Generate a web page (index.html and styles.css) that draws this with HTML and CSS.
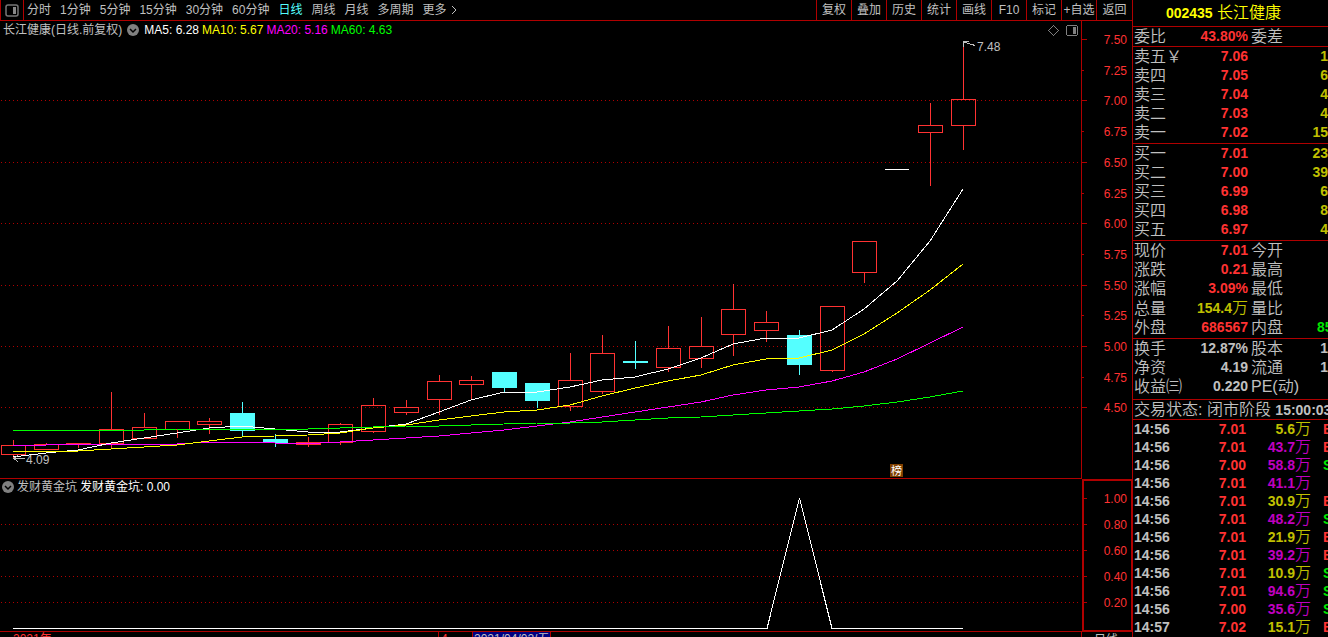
FILE: index.html
```html
<!DOCTYPE html>
<html lang="zh-CN">
<head>
<meta charset="UTF-8" />
<meta name="viewport" content="width=device-width, initial-scale=1" />
<title>002435 长江健康</title>
<link rel="stylesheet" href="styles.css">
</head>
<body>

<div class="terminal">
  <main class="main">
    <nav class="toolbar">
      <button class="layout-btn" aria-label="布局">
        <svg width="14" height="13" viewBox="0 0 14 13"><rect x="1" y="1" width="12" height="11" rx="2" fill="none" stroke="#777" stroke-width="1.5"/><rect x="8" y="3" width="3" height="7" fill="#888"/></svg>
      </button>
      <div class="periods">
        <button>分时</button>
        <button>1分钟</button>
        <button>5分钟</button>
        <button>15分钟</button>
        <button>30分钟</button>
        <button>60分钟</button>
        <button class="active">日线</button>
        <button>周线</button>
        <button>月线</button>
        <button>多周期</button>
        <button class="more">更多<svg width="6" height="10" viewBox="0 0 6 10"><path d="M1 1l4 4-4 4" fill="none" stroke="#c0c0c0"/></svg></button>
      </div>
      <div class="tools">
        <button>复权</button>
        <button>叠加</button>
        <button>历史</button>
        <button>统计</button>
        <button>画线</button>
        <button>F10</button>
        <button>标记</button>
        <button>+自选</button>
        <button>返回</button>
      </div>
    </nav>

    <section class="pane">
      <div class="legend">
        <span>长江健康(日线.前复权)</span>
        <svg class="chevron" width="12" height="12" viewBox="0 0 12 12"><circle cx="6" cy="6" r="6" fill="#808080"/><path d="M3 5l3 3 3-3" fill="none" stroke="#000" stroke-width="1.5"/></svg>
        <span class="white">MA5: 6.28</span>
        <span class="yellow">MA10: 5.67</span>
        <span class="magenta">MA20: 5.16</span>
        <span class="green">MA60: 4.63</span>
      </div>
      <svg id="price" class="chart" viewBox="0 21 1132 457"></svg>
    </section>

    <section class="pane sub">
      <div class="legend">
        <svg width="12" height="12" viewBox="0 0 12 12"><circle cx="6" cy="6" r="6" fill="#808080"/><path d="M3 5l3 3 3-3" fill="none" stroke="#000" stroke-width="1.5"/></svg>
        <span>发财黄金坑</span>
        <span class="white">发财黄金坑: 0.00</span>
      </div>
      <svg id="indicator" class="chart" viewBox="0 478 1132 154"></svg>
    </section>

    <svg class="chart" viewBox="0 632 1132 18">
      <path class="axis" d="M438.5 632v18M1081.5 632v18"/>
      <text class="tick" x="13" y="643">2021年</text>
      <text class="tick" x="441" y="643">4</text>
      <rect x="472.5" y="631.5" width="78" height="20" fill="#000080" stroke="#b00000"/>
      <text class="note" x="474" y="643">2021/04/02/五</text>
      <text class="note" x="1094" y="644">日线</text>
    </svg>
  </main>

  <aside class="side">
    <h1><b>002435</b> 长江健康</h1>
    <table class="quote single">
      <tr><th>委比</th><td class="up">43.80%</td><th>委差</th><td></td></tr>
    </table>
    <table class="quote">
      <tr><th>卖五￥</th><td class="up">7.06</td><th></th><td class="vol">1</td></tr>
      <tr><th>卖四</th><td class="up">7.05</td><th></th><td class="vol">6</td></tr>
      <tr><th>卖三</th><td class="up">7.04</td><th></th><td class="vol">4</td></tr>
      <tr><th>卖二</th><td class="up">7.03</td><th></th><td class="vol">4</td></tr>
      <tr><th>卖一</th><td class="up">7.02</td><th></th><td class="vol">15</td></tr>
    </table>
    <table class="quote">
      <tr><th>买一</th><td class="up">7.01</td><th></th><td class="vol">23</td></tr>
      <tr><th>买二</th><td class="up">7.00</td><th></th><td class="vol">39</td></tr>
      <tr><th>买三</th><td class="up">6.99</td><th></th><td class="vol">6</td></tr>
      <tr><th>买四</th><td class="up">6.98</td><th></th><td class="vol">8</td></tr>
      <tr><th>买五</th><td class="up">6.97</td><th></th><td class="vol">4</td></tr>
    </table>
    <table class="quote">
      <tr><th>现价</th><td class="up">7.01</td><th>今开</th><td></td></tr>
      <tr><th>涨跌</th><td class="up">0.21</td><th>最高</th><td></td></tr>
      <tr><th>涨幅</th><td class="up">3.09%</td><th>最低</th><td></td></tr>
      <tr><th>总量</th><td class="vol">154.4<i>万</i></td><th>量比</th><td></td></tr>
      <tr><th>外盘</th><td class="up">686567</td><th>内盘</th><td class="down cut">85</td></tr>
    </table>
    <table class="quote basics">
      <tr><th>换手</th><td>12.87%</td><th>股本</th><td>1</td></tr>
      <tr><th>净资</th><td>4.19</td><th>流通</th><td>1</td></tr>
      <tr><th>收益㈢</th><td>0.220</td><th>PE(动)</th><td></td></tr>
    </table>
    <p class="status">交易状态: 闭市阶段 <b>15:00:03</b></p>
    <table class="ticks">
      <tbody id="ticks"></tbody>
    </table>
  </aside>
</div>

<script>
  // center x, open/close top, open/close bottom, high, low, falling
  const candles = [
    [13, 445, 454, 440, 457], [46, 444, 449, 443, 449], [78, 443, 444, 443, 447],
    [111, 429, 443, 392, 447], [144, 427, 438, 413, 438], [177, 421, 429, 421, 437],
    [209, 421, 424, 418, 433], [242, 413, 430, 402, 435, 1], [275, 439, 442, 434, 446, 1],
    [308, 442, 444, 437, 446], [340, 424, 442, 423, 444], [373, 405, 431, 398, 432],
    [406, 407, 412, 400, 414], [439, 381, 399, 375, 414], [471, 380, 384, 376, 399],
    [504, 372, 387, 372, 391, 1], [537, 383, 400, 383, 407, 1], [570, 380, 406, 353, 410],
    [602, 353, 391, 335, 393], [635, 361, 362, 341, 368, 1], [668, 348, 367, 326, 371],
    [701, 346, 358, 317, 367], [733, 309, 334, 284, 355], [766, 322, 330, 311, 341],
    [799, 335, 364, 330, 374, 1], [832, 306, 370, 306, 371], [864, 241, 272, 241, 282],
    [930, 125, 132, 103, 185], [963, 99, 125, 41, 149]
  ];

  const averages = {
    '#ff00ff': '13,445 46,445 78,444 177,444 209,442 242,442 275,443 320,443 340,442 373,440 406,438 439,436 471,433 504,430 537,426 570,422 602,417 635,412 668,407 701,402 733,395 766,390 799,387 832,381 864,372 897,359 930,343 963,327',
    '#ffffff': '13,457 46,453 67,451 78,450 111,443 144,438 177,433 209,428 242,426 275,429 308,432 340,432 373,428 406,424 439,412 471,400 504,392 537,392 570,387 602,380 635,377 668,369 701,358 733,344 766,338 799,338 832,330 864,309 897,281 930,241 963,189',
    '#ffff00': '13,451 78,451 111,449 144,447 177,445 209,441 242,437 275,436 308,435 340,433 373,428 406,425 439,420 471,416 504,412 537,410 570,405 602,396 635,388 668,381 701,375 733,365 766,359 799,358 832,350 864,334 897,313 930,290 963,264',
    '#00ff00': '13,430 144,430 177,429 308,429 340,428 373,427 406,426 439,426 504,424 537,423 570,423 602,422 635,420 668,418 701,417 733,415 766,413 799,411 832,409 864,406 897,402 930,397 963,391'
  };

  function line(d, cls) {
    return `<path class="${cls}" d="${d}"/>`;
  }

  function label(y, value) {
    return `<text class="tick" x="1127" y="${y + 5}" text-anchor="end">${value}</text>`;
  }

  function drawPrice() {
    let out = line('M1081.5 21V478', 'axis');
    for (let i = 0; i <= 12; i++) {
      const y = Math.round(39 + i * 30.7);
      const major = i % 2 === 0;
      out += line(`M1082 ${y + 0.5}h${major ? 5 : 2}`, 'axis');
      out += label(y, (7.5 - i * 0.25).toFixed(2));
      if (major && i > 0) out += line(`M1 ${y + 0.5}H1081`, 'grid');
    }
    candles.forEach(([x, top, bottom, high, low, falling]) => {
      const cls = falling ? 'fall' : 'rise';
      const c = x + 0.5;
      out += line(`M${c} ${high}V${top}M${c} ${bottom}V${low + 1}`, cls);
      out += `<rect class="${cls}" x="${x - 11.5}" y="${top + 0.5}" width="24" height="${bottom - top}"/>`;
    });
    out += line('M885 169.5H909', 'flat');
    for (const color in averages) {
      out += `<polyline class="curve" stroke="${color}" points="${averages[color]}"/>`;
    }
    out += line('M975 45.5L964 42M969 41.5H963V47M25 458.5H14M18 455.5L14 458.5L18 462', 'arrow');
    out += '<text class="note" x="977" y="51">7.48</text><text class="note" x="26" y="464">4.09</text>';
    // pane controls in the top right corner
    out += '<path class="control" d="M1053.5 25.5l5 5-5 5-5-5z"/><rect class="control" x="1066.5" y="25.5" width="11" height="10" rx="2"/><rect x="1073" y="27" width="3" height="7" fill="#808080"/>';
    out += '<rect x="890" y="464" width="13" height="13" fill="#804000"/><text class="badge" x="891" y="475">榜</text>';
    document.getElementById('price').innerHTML = out;
  }

  function drawIndicator() {
    let out = line('M0 478.5H1082M0 631.5H1082', 'axis');
    out += '<rect class="box" x="1083" y="480" width="49" height="151"/>';
    for (let i = 0; i < 5; i++) {
      const y = 498 + i * 26;
      out += line(`M1083 ${y + 0.5}h4`, 'axis');
      if (i < 4) out += line(`M1083 ${y + 13.5}h1`, 'axis');
      out += label(y, (1 - i * 0.2).toFixed(2));
      if (i > 0) out += line(`M1 ${y + 0.5}H1081`, 'grid');
    }
    out += '<polyline class="curve" stroke="#fff" points="13,628.5 767,628.5 799.5,498 832,628.5 963,628.5"/>';
    document.getElementById('indicator').innerHTML = out;
  }

  const ticks = [
    ['14:56', '7.01', '5.6', 'B'],
    ['14:56', '7.01', '43.7', 'B', 1],
    ['14:56', '7.00', '58.8', 'S', 1],
    ['14:56', '7.01', '41.1', '', 1],
    ['14:56', '7.01', '30.9', 'B'],
    ['14:56', '7.01', '48.2', 'S', 1],
    ['14:56', '7.01', '21.9', 'B'],
    ['14:56', '7.01', '39.2', 'B', 1],
    ['14:56', '7.01', '10.9', 'S'],
    ['14:56', '7.01', '94.6', 'S', 1],
    ['14:56', '7.00', '35.6', 'S', 1],
    ['14:57', '7.02', '15.1', 'B']
  ];

  document.getElementById('ticks').innerHTML = ticks.map(([time, price, qty, side, big]) =>
    `<tr><td>${time}</td><td class="up">${price}</td><td class="${big ? 'big' : 'vol'}">${qty}<i>万</i></td><td class="${side === 'B' ? 'up' : 'down'}">${side}</td></tr>`
  ).join('');

  drawPrice();
  drawIndicator();
</script>

</body>
</html>
```
FILE: styles.css
```css
body {
  margin: 0;
  background: #000;
  color: #c0c0c0;
  font-family: "Liberation Sans", "Noto Sans CJK SC", sans-serif;
  font-size: 12px;
  height: 100vh;
  overflow: hidden;
}
.terminal {
  display: grid;
  grid-template-columns: minmax(0, 1fr) 196px;
  height: 100%;
}
button {
  background: none;
  border: none;
  padding: 0;
  color: inherit;
  font: inherit;
  line-height: 20px;
  white-space: nowrap;
  cursor: pointer;
}
.toolbar {
  display: flex;
  height: 20px;
  border-bottom: 1px solid #b00000;
}
.layout-btn {
  display: flex;
  align-items: center;
  justify-content: center;
  width: 24px;
  border-left: 1px solid #b00000;
  border-right: 1px solid #b00000;
}
.periods {
  display: flex;
  flex: 1;
  gap: 9px;
  padding-left: 3px;
}
.periods .active {
  color: #54ffff;
}
.more {
  display: flex;
  align-items: center;
  gap: 4px;
}
.tools {
  display: flex;
}
.tools button {
  width: 35px;
  border-left: 1px solid #b00000;
}
.tools button:last-child {
  width: 36px;
}
.pane {
  position: relative;
}
.legend {
  position: absolute;
  top: 0;
  left: 3px;
  display: flex;
  align-items: center;
  gap: 3px;
  line-height: 18px;
}
.sub .legend {
  left: 2px;
}
.chevron {
  margin: 0 2px;
}
.white { color: #fff; }
.yellow { color: #ffff00; }
.magenta { color: #ff00ff; }
.green { color: #00ff00; }

.chart {
  display: block;
  width: 100%;
}
.chart path,
.chart rect,
.chart polyline {
  shape-rendering: crispEdges;
}
.axis { stroke: #b00000; }
.grid {
  stroke: #b00000;
  stroke-dasharray: 1 3;
}
.box {
  fill: none;
  stroke: #b00000;
  stroke-width: 2px;
}
.rise {
  fill: none;
  stroke: #ff3232;
}
.fall {
  fill: #54ffff;
  stroke: #54ffff;
}
.flat { stroke: #fff; }
.curve { fill: none; }
.arrow {
  fill: none;
  stroke: #c0c0c0;
}
.control {
  fill: none;
  stroke: #808080;
}
.tick { fill: #ff3232; }
.note { fill: #c0c0c0; }
.badge {
  fill: #fff;
  font-size: 11px;
}

.side {
  border-left: 1px solid #b00000;
  overflow: hidden;
  font-size: 16px;
}
.side h1 {
  margin: 0;
  font-size: 16px;
  font-weight: 350;
  line-height: 26px;
  height: 26px;
  text-align: center;
  color: #ffff00;
  padding-right: 14px;
}
.side b {
  font-size: 14px;
  font-weight: bold;
}
.side table {
  width: 100%;
  table-layout: fixed;
  border-collapse: separate;
  border-spacing: 0;
}
.side i {
  font-size: 16px;
  font-style: normal;
  font-weight: 350;
}
.side th,
.side td {
  padding: 0;
  height: 19px;
  line-height: 19px;
  white-space: nowrap;
}
.side th {
  font-weight: 350;
  text-align: left;
  padding-left: 1px;
  width: 49px;
}
.side td {
  font-size: 14px;
  font-weight: bold;
  text-align: right;
}
.side .quote {
  border-top: 1px solid #b00000;
  padding-bottom: 1px;
}
.side .single {
  padding-bottom: 0;
}
.side .basics {
  padding-bottom: 3px;
}
.quote td:nth-child(2) {
  width: 65px;
}
.side .quote th:nth-child(3) {
  width: 42px;
  padding-left: 3px;
}
.side .cut {
  text-align: left;
  padding-left: 24px;
}
.side .up { color: #ff3232; }
.side .down { color: #00e600; }
.side .vol { color: #c0c000; }
.side .big { color: #c000c0; }
.status {
  margin: 0;
  padding-left: 1px;
  border-top: 1px solid #b00000;
  border-bottom: 1px solid #b00000;
  font-weight: 350;
  line-height: 19px;
  height: 19px;
  white-space: nowrap;
}
.side .ticks td {
  height: 18px;
  line-height: 18px;
}
.side .ticks td:first-child {
  text-align: left;
  padding-left: 1px;
  width: 49px;
}
.ticks td:nth-child(2) {
  width: 63px;
}
.ticks td:nth-child(3) {
  width: 65px;
}
.side .ticks td:last-child {
  text-align: left;
  padding-left: 12px;
}
```
